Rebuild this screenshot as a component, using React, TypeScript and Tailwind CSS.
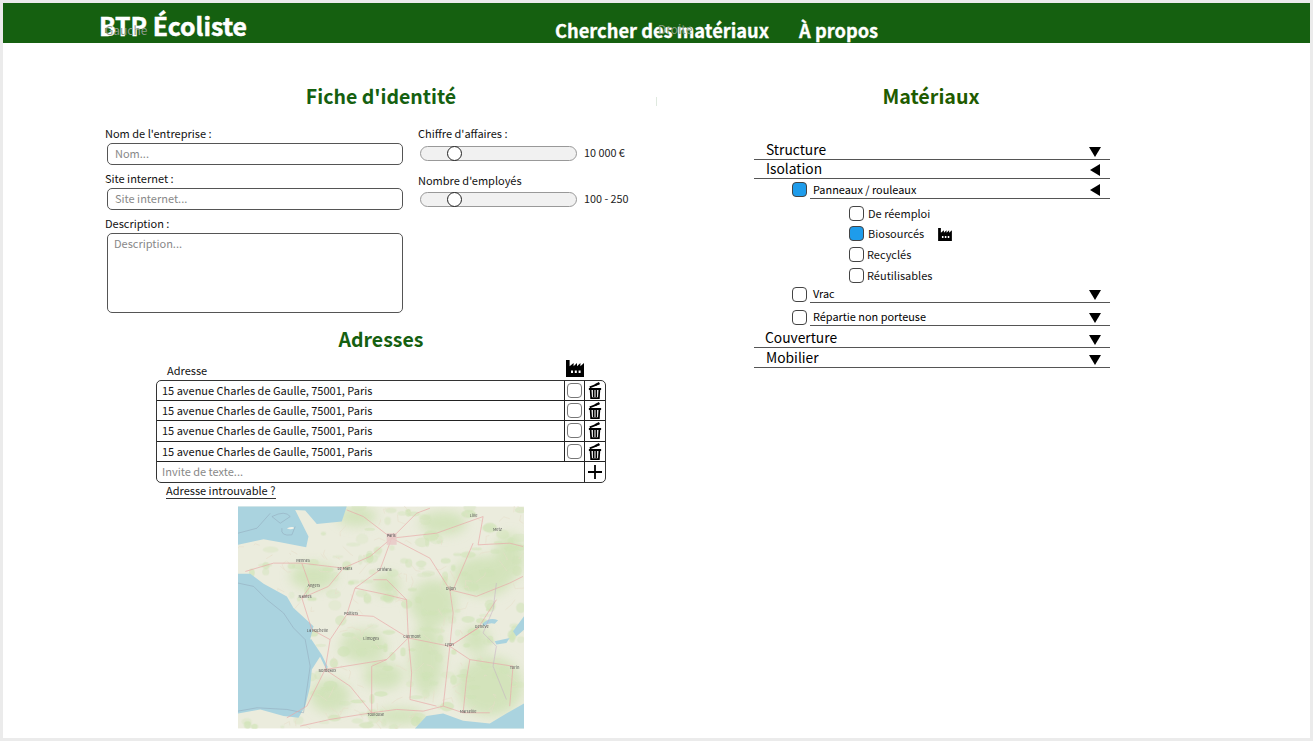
import React from "react";

const FONT = '"Noto Sans CJK SC", "Source Sans Pro", "Noto Sans", sans-serif';

function Factory({ className }: { className?: string }) {
  return (
    <svg viewBox="0 0 18 17" className={className}>
      <path
        fillRule="evenodd"
        d="M0 0h3.600v6.200l4-3.200v3.200l3.400-3.200v3.200l3.400-3.200v3.200L18 3v14H0V0zM5 10.500v2.600h2v-2.600H5zm3.800 0v2.600h2v-2.600H8.800zm3.800 0v2.600h2v-2.600h-2z"
        fill="#000"
      />
    </svg>
  );
}

function Trash() {
  return (
    <svg viewBox="0 0 16 20" className="h-[19px] w-[14px]">
      <path d="M2 6.400 13 2" stroke="#000" strokeWidth="2" fill="none" />
      <path d="M8 3.800 13 1.400" stroke="#000" strokeWidth="2.400" fill="none" />
      <path d="M1 8.200h14" stroke="#000" strokeWidth="2.200" />
      <path d="M3 9 3.600 18.600H12.400L13 9" stroke="#000" strokeWidth="2" fill="none" />
      <path d="M6.500 9.500V17.500M9.500 9.500V17.500" stroke="#000" strokeWidth="1.800" />
    </svg>
  );
}

function Down() {
  return (
    <svg viewBox="0 0 12 10" className="mr-[-1px] h-[10px] w-[12px]">
      <path d="M0 0H12L6 10Z" fill="#000" />
    </svg>
  );
}

function LeftTri() {
  return (
    <svg viewBox="0 0 10 12" className="h-[12px] w-[10px]">
      <path d="M10 0V12L0 6Z" fill="#000" />
    </svg>
  );
}

function Box({ on }: { on?: boolean }) {
  return (
    <span
      className={
        "block h-[15px] w-[15px] shrink-0 rounded-[4px] border border-[#444] " +
        (on ? "bg-[#1e9ceb]" : "bg-white")
      }
    />
  );
}

function Slider({ value, top }: { value: string; top: string }) {
  return (
    <div className={"flex items-center " + top}>
      <div className="relative ml-[2px] h-[15px] w-[157px] rounded-full border border-[#999] bg-[#f1f1f1]">
        <span className="absolute left-[26px] top-[-1px] h-[15px] w-[15px] rounded-full border border-[#222] bg-white" />
      </div>
      <span className="mb-[2px] ml-[7px] text-[10.800px] leading-[15px] text-[#222]">{value}</span>
    </div>
  );
}

function AddressRow() {
  return (
    <div className="flex h-[20.400px] border-b border-[#222]">
      <div className="flex-1 pl-[5px] text-[11px] leading-[19px] text-[#111]">
        15 avenue Charles de Gaulle, 75001, Paris
      </div>
      <div className="flex w-[20px] items-center justify-center border-l border-[#222]">
        <span className="block h-[15px] w-[15px] rounded-[4px] border border-[#777] bg-white" />
      </div>
      <div className="flex w-[21px] items-center justify-center border-l border-[#222]">
        <Trash />
      </div>
    </div>
  );
}

function MainRow({
  label,
  open,
  h,
  textCls,
}: {
  label: string;
  open?: boolean;
  h: string;
  textCls: string;
}) {
  return (
    <div className={"flex items-end justify-between border-b border-[#555] pr-[10px] " + h}>
      <span className={"text-[13.800px] leading-[20px] text-black " + textCls}>{label}</span>
      <span className="mb-[2px] flex">{open ? <LeftTri /> : <Down />}</span>
    </div>
  );
}

function SubRow({
  label,
  on,
  open,
  h,
  boxMb,
}: {
  label: string;
  on?: boolean;
  open?: boolean;
  h: string;
  boxMb: string;
}) {
  return (
    <div className={"ml-[38px] flex items-end " + h}>
      <span className={boxMb}>
        <Box on={on} />
      </span>
      <div className="ml-[3px] flex flex-1 items-end justify-between border-b border-[#555] pr-[10px]">
        <span className="ml-[3px] text-[10.900px] leading-[18px] text-black">{label}</span>
        <span className="mb-[2px] flex">{open ? <LeftTri /> : <Down />}</span>
      </div>
    </div>
  );
}

function Leaf({
  label,
  on,
  gap,
  h,
  icon,
}: {
  label: string;
  on?: boolean;
  gap: string;
  h: string;
  icon?: boolean;
}) {
  return (
    <div className={"ml-[95px] flex items-center " + h}>
      <Box on={on} />
      <span className={"text-[11px] leading-[15px] text-[#111] " + gap}>{label}</span>
      {icon && <Factory className="ml-[14px] mt-[1px] h-[13px] w-[14px]" />}
    </div>
  );
}

function rng(seed: number) {
  let s = seed;
  return () => {
    s = (s * 16807) % 2147483647;
    return s / 2147483647;
  };
}

const isLand = (x: number, y: number) => {
  if (y < 135 && x < 350 && y < 75 + (x > 260 ? 0 : 60)) return false;
  if (y > 222 && y < 650 && x < 120 + (y - 222) * 0.35 && x < 245) return false;
  if (y > 650 && x > 570) return false;
  return true;
};

function FranceMap() {
  const roads = [
    "M485 115 L420 170 L340 205 L215 190 L130 190",
    "M485 115 L450 210 L375 265 L350 345 L300 420 L285 510",
    "M485 115 L600 175 L660 270 L670 340 L660 440 L640 620",
    "M485 115 L620 100 L760 50",
    "M485 115 L400 50 L350 30",
    "M485 115 L560 40 L600 25",
    "M215 190 L240 260 L215 295 L245 390",
    "M340 205 L295 260 L215 295",
    "M375 265 L470 285 L530 300 L535 415",
    "M350 345 L430 350 L535 415",
    "M535 415 L470 480 L285 510",
    "M535 415 L660 440 L745 385 L800 300",
    "M535 415 L545 520 L540 600 L620 620",
    "M285 510 L360 560 L425 640",
    "M425 640 L500 630 L580 635 L640 620 L700 640 L780 640",
    "M425 640 L425 500 L470 480",
    "M660 270 L740 290 L840 250 L880 230",
    "M730 130 L670 270",
    "M760 50 L745 135 L840 130 L880 140",
    "M745 385 L660 440 L720 480 L710 540 L700 640",
    "M720 480 L850 500 L840 620",
    "M285 510 L230 620 L170 655",
    "M425 640 L300 660 L210 680",
    "M245 390 L300 420",
    "M130 190 L45 215",
    "M430 240 L470 240 L530 300",
  ];
  const labels: [number, number, string][] = [
    [470, 112, "Paris"],
    [198, 188, "Rennes"],
    [322, 211, "Le Mans"],
    [442, 213, "Orléans"],
    [232, 262, "Angers"],
    [205, 294, "Nantes"],
    [342, 346, "Poitiers"],
    [230, 398, "La Rochelle"],
    [400, 420, "Limoges"],
    [520, 416, "Clermont"],
    [648, 270, "Dijon"],
    [265, 516, "Bordeaux"],
    [412, 649, "Toulouse"],
    [735, 385, "Genève"],
    [645, 440, "Lyon"],
    [840, 507, "Turin"],
    [690, 640, "Marseille"],
    [790, 92, "Metz"],
    [720, 50, "Lille"],
  ];
  const r = rng(4242);
  const patches: { x: number; y: number; rx: number; ry: number; o: number }[] = [];
  const minor: string[] = [];
  for (let i = 0; i < 240; i++) {
    const x = 23 + r() * 860;
    const y = 20 + r() * 667;
    const rx = 6 + r() * 18;
    const ry = 4 + r() * 12;
    const o = 0.25 + r() * 0.45;
    if (isLand(x, y)) patches.push({ x, y, rx, ry, o });
  }
  for (let i = 0; i < 170; i++) {
    const x = 23 + r() * 860;
    const y = 20 + r() * 667;
    const dx = (r() - 0.5) * 70;
    const dy = (r() - 0.5) * 70;
    const mx = (r() - 0.5) * 24;
    const my = (r() - 0.5) * 24;
    if (isLand(x, y) && isLand(x + dx, y + dy))
      minor.push(`M${x} ${y}L${x + dx / 2 + mx} ${y + dy / 2 + my}L${x + dx} ${y + dy}`);
  }
  return (
    <svg viewBox="23 20 860 667" className="block h-[223px] w-[286px]">
      <defs>
        <filter id="mapblur" x="-5%" y="-5%" width="110%" height="110%">
          <feGaussianBlur stdDeviation="16" />
        </filter>
        <filter id="soft">
          <feGaussianBlur stdDeviation="1.200" />
        </filter>
      </defs>
      <rect x="23" y="20" width="860" height="667" fill="#ebecdd" />
      <g filter="url(#mapblur)" fill="#c9e0ae" opacity="0.7">
        <ellipse cx="610" cy="310" rx="70" ry="70" />
        <ellipse cx="590" cy="480" rx="50" ry="110" />
        <ellipse cx="760" cy="230" rx="90" ry="60" />
        <ellipse cx="840" cy="170" rx="45" ry="70" />
        <ellipse cx="780" cy="560" rx="100" ry="90" />
        <ellipse cx="300" cy="590" rx="60" ry="50" />
        <ellipse cx="400" cy="440" rx="70" ry="50" />
        <ellipse cx="460" cy="530" rx="60" ry="40" />
        <ellipse cx="510" cy="650" rx="70" ry="25" />
        <ellipse cx="470" cy="255" rx="40" ry="35" />
        <ellipse cx="380" cy="50" rx="60" ry="30" />
        <ellipse cx="250" cy="230" rx="70" ry="40" />
        <ellipse cx="640" cy="70" rx="70" ry="35" />
        <ellipse cx="740" cy="420" rx="40" ry="40" />
      </g>
      <g filter="url(#soft)">
        <g fill="#cfe3b6">
          {patches.map((p, i) => (
            <ellipse key={i} cx={p.x} cy={p.y} rx={p.rx} ry={p.ry} opacity={p.o} />
          ))}
        </g>
        <g fill="none" stroke="#e6dcc8" strokeWidth="1.500">
          {minor.map((d, i) => (
            <path key={i} d={d} />
          ))}
        </g>
        <path
          d="M23 20H350L335 65L260 72L225 32L195 30L235 110L228 142L150 127L100 118L23 135Z"
          fill="#aad3df"
        />
        <path d="M23 222L60 222L100 252L170 290L190 325L250 380L240 420L272 468L245 510L240 560L225 620L205 655L160 650L90 630L23 642Z" fill="#aad3df" />
        <path d="M240 420L272 468L290 505" stroke="#aad3df" strokeWidth="7" fill="none" />
        <path d="M555 687L590 650L640 642L700 664L780 672L830 642L883 612V687Z" fill="#aad3df" />
        <path d="M758 372Q780 350 805 362L795 372Q775 368 762 380Z" fill="#aad3df" />
        <path d="M850 395L883 350V390L860 410Z" fill="#aad3df" />
        <path d="M795 425L840 415L830 430L800 435Z" fill="#aad3df" />
        <path d="M170 85Q190 78 192 85Q180 92 170 85Z" fill="#f5f3e8" />
        <path d="M125 50Q165 30 180 50L150 70Z" fill="none" stroke="#90a5b8" strokeWidth="1.500" />
        <path d="M155 85Q150 110 185 105L195 80" fill="none" stroke="#90a5b8" strokeWidth="1.500" />
        <path d="M23 100L80 85L120 40" fill="none" stroke="#90a5b8" strokeWidth="1.500" />
        <path d="M23 250L70 260L110 300L160 340L190 385L225 420L240 500L220 640L170 630L80 625L23 635" fill="none" stroke="#90a5b8" strokeWidth="1.500" />
        <g fill="none" stroke="#e8a8a8" strokeWidth="2">
          {roads.map((d, i) => (
            <path key={i} d={d} />
          ))}
        </g>
        <path d="M800 250L790 330L760 400L800 440L790 500L830 600" fill="none" stroke="#c4a9c4" strokeWidth="1.500" />
        <path d="M470 100h30v35h-30z" fill="#e9c7c5" opacity="0.8" />
        <g fill="#555" fontSize="12" fontFamily={FONT}>
          {labels.map(([x, y, t]) => (
            <text key={t} x={x} y={y}>
              {t}
            </text>
          ))}
        </g>
      </g>
    </svg>
  );
}

export default function App() {
  return (
    <div
      className="h-[741px] w-[1313px] overflow-hidden bg-[#ebebeb] p-[3px]"
      style={{ fontFamily: FONT }}
    >
      <div className="relative h-full bg-white">
        <header className="relative flex h-[40px] bg-[#156010] text-white">
          <div className="ml-[96px] w-[452px] text-[24.800px] font-bold leading-[44px] [-webkit-text-stroke:0.5px_white]">
            BTP Écoliste
          </div>
          <nav className="flex pt-[13px] text-[18.300px] font-bold leading-[28px] [-webkit-text-stroke:0.3px_white]">
            <span className="ml-[4px]">Chercher des matériaux</span>
            <span className="ml-[30px]">À propos</span>
          </nav>
          <span className="absolute left-[102px] top-[19px] text-[12px] leading-[16px] text-[#8f9a8e]">
            Gauche
          </span>
          <span className="absolute left-[655px] top-[18px] text-[12px] leading-[16px] text-[#7f9a7c]">
            Droite
          </span>
        </header>
        <span className="absolute left-[653px] top-[94px] h-[9px] w-px bg-[#dfe9df]" />

        <main className="flex">
          <section className="ml-[102px] w-[552px]">
            <h2 className="mt-[39px] text-center text-[19.500px] font-bold leading-[28px] text-[#156010]">
              Fiche d'identité
            </h2>
            <div className="mt-[15px] flex">
              <div className="w-[313px]">
                <label className="block text-[11px] leading-[17px] text-[#111]">
                  Nom de l'entreprise :
                </label>
                <div className="ml-[2px] mt-[1px] h-[22px] w-[296px] rounded-[5px] border border-[#555] pl-[7px] text-[11px] leading-[19px] text-[#888]">
                  Nom...
                </div>
                <label className="mt-[5px] block text-[11px] leading-[17px] text-[#111]">
                  Site internet :
                </label>
                <div className="ml-[2px] mt-[1px] h-[22px] w-[296px] rounded-[5px] border border-[#555] pl-[7px] text-[11px] leading-[19px] text-[#888]">
                  Site internet...
                </div>
                <label className="mt-[5px] block text-[11px] leading-[17px] text-[#111]">
                  Description :
                </label>
                <div className="ml-[2px] mt-[1px] h-[80px] w-[296px] rounded-[5px] border border-[#555] pl-[6px] pt-[1px] text-[11px] leading-[17px] text-[#888]">
                  Description...
                </div>
              </div>
              <div>
                <div className="text-[11px] leading-[17px] text-[#111]">Chiffre d'affaires :</div>
                <Slider value="10 000 €" top="mt-[3px]" />
                <div className="mt-[10px] text-[11px] leading-[17px] text-[#111]">Nombre d'employés</div>
                <Slider value="100 - 250" top="mt-[2px]" />
              </div>
            </div>

            <h2 className="mt-[12px] text-center text-[19.500px] font-bold leading-[28px] text-[#156010]">
              Adresses
            </h2>
            <div className="ml-[51px] w-[450px]">
              <div className="flex h-[26.500px] items-end">
                <span className="ml-[11px] flex-1 text-[11px] leading-[20px] text-[#111]">Adresse</span>
                <Factory className="mb-[3px] mr-[22px] h-[17px] w-[18px]" />
              </div>
              <div className="overflow-hidden rounded-[5px] border border-[#333]">
                <AddressRow />
                <AddressRow />
                <AddressRow />
                <AddressRow />
                <div className="flex h-[19.500px]">
                  <div className="flex-1 pl-[5px] text-[11px] leading-[19px] text-[#888]">Invite de texte...</div>
                  <div className="flex w-[21px] items-center justify-center border-l border-[#222]">
                    <svg viewBox="0 0 14 14" className="h-[14px] w-[14px]">
                      <path d="M7 0V14M0 7H14" stroke="#000" strokeWidth="1.800" />
                    </svg>
                  </div>
                </div>
              </div>
              <div className="ml-[10px] w-[110px] whitespace-nowrap border-b border-[#333] text-[11px] leading-[15px] text-[#111]">
                Adresse introuvable ?
              </div>
            </div>
            <div className="ml-[133px] mt-[7px]">
              <FranceMap />
            </div>
          </section>

          <section className="ml-[97px] w-[356px]">
            <h2 className="ml-[-8px] mt-[39px] w-[370px] text-center text-[19.700px] font-bold leading-[28px] text-[#1f5c00]">
              Matériaux
            </h2>
            <div className="mt-[30px]">
              <MainRow label="Structure" h="h-[20px]" textCls="ml-[12px]" />
              <MainRow label="Isolation" open h="h-[19px]" textCls="ml-[12px]" />
              <SubRow label="Panneaux / rouleaux" on open h="h-[20px]" boxMb="mb-[2px]" />
              <Leaf label="De réemploi" gap="ml-[4px]" h="mt-[6px] h-[17px]" />
              <Leaf label="Biosourcés" on gap="ml-[4px]" h="mt-[2px] h-[19px]" icon />
              <Leaf label="Recyclés" gap="ml-[3px]" h="mt-[2px] h-[19px]" />
              <Leaf label="Réutilisables" gap="ml-[3px]" h="mt-[2px] h-[19px]" />
              <SubRow label="Vrac" h="h-[18px]" boxMb="mb-[1px]" />
              <SubRow label="Répartie non porteuse" h="h-[23px]" boxMb="mb-[1px]" />
              <MainRow label="Couverture" h="h-[22px]" textCls="ml-[11px]" />
              <MainRow label="Mobilier" h="h-[20px]" textCls="ml-[12px]" />
            </div>
          </section>
        </main>
      </div>
    </div>
  );
}
